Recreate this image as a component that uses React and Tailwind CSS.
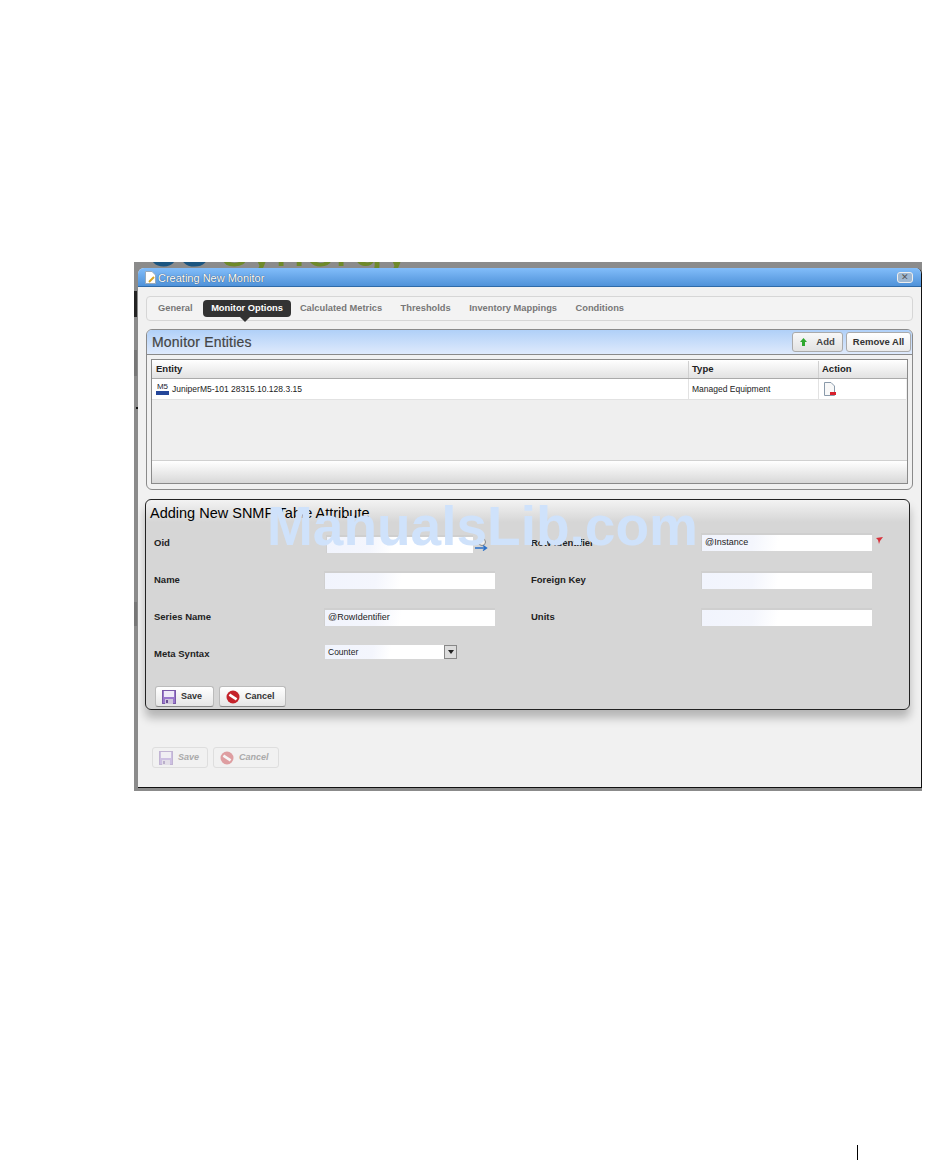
import React from "react";

const SaveIcon = ({ faded }) => (
  <svg width="14" height="14" viewBox="0 0 14 14" className={faded ? "opacity-40" : ""}>
    <rect x="0.5" y="0.5" width="13" height="13" fill="#9a78cc" stroke="#7a5aa8" />
    <rect x="2" y="1" width="10" height="6" fill="#efeaf8" />
    <rect x="3" y="9" width="8" height="5" fill="#cfc6dc" />
    <rect x="4" y="10" width="2" height="3" fill="#6a4e92" />
  </svg>
);

const CancelIcon = ({ faded }) => (
  <svg width="14" height="14" viewBox="0 0 14 14" className={faded ? "opacity-40" : ""}>
    <circle cx="7" cy="7" r="6.5" fill="#c4232b" />
    <path d="M3.4 4.6 L10.6 9.4" stroke="#fff" strokeWidth="2.6" />
  </svg>
);

const tabs = ["General", "Monitor Options", "Calculated Metrics", "Thresholds", "Inventory Mappings", "Conditions"];

const Input = ({ value, width = "w-[171px]", className = "" }) => (
  <div
    className={`${width} h-[18px] flex items-center pl-[3px] text-[9px] text-[#222] border-t-2 border-l border-[#cfcfcf] bg-[linear-gradient(100deg,#f1f4fd_0%,#f4f6fd_30%,#ffffff_45%,#ffffff_100%)] ${className}`}
  >
    {value}
  </div>
);

const Label = ({ children, className = "" }) => (
  <div className={`mt-[2px] text-[9.5px] font-bold text-[#222] ${className}`}>{children}</div>
);

const FormButton = ({ icon, label, width, faded }) => (
  <button
    className={`${width} h-[21px] flex items-center pl-[6px] gap-[5px] rounded-[3px] text-[9px] font-bold ${
      faded
        ? "border border-[#dedede] italic text-[#aaa] bg-[#f1f1f1]"
        : "border border-[#bbb] border-b-[#888] text-[#333] bg-[linear-gradient(#ffffff,#e6e6e6)]"
    }`}
  >
    {icon}
    {label}
  </button>
);

export default function App() {
  return (
    <div className="relative min-h-[1163px] bg-white font-['Liberation_Sans',Arial,sans-serif]">
      <div className="pt-[262px] pl-[134px] w-[922px]">
        {/* grey frame behind the dialog */}
        <div className="relative h-[529px] w-[788px] pt-[6px] pl-[4px] pb-[3px] bg-[#8b8b8b] overflow-hidden">
          <div className="absolute left-[14px] top-[-35px] text-[54px] leading-[40px] whitespace-nowrap text-[#1b5580] font-bold">
            co<span className="ml-[10px] text-[#6f8a2a] font-normal">synergy</span>
          </div>
          <div className="absolute left-0 top-[29px] w-[3px] h-[26px] bg-[#222]" />
          <div className="absolute left-0 top-[88px] w-[3px] h-[26px] bg-[#777]" />
          <div className="absolute left-[2px] top-[145px] w-[2px] h-[2px] bg-[#111]" />
          <div className="absolute left-0 top-[340px] w-[3px] h-[24px] bg-[#777]" />

          <div className="relative h-[520px] bg-[#f1f1f1] rounded-t-[6px] border-r border-b border-[#111] overflow-hidden">
            {/* title bar */}
            <div className="h-[19px] flex items-center pl-[7px] pr-[8px] border-b border-[#2e6aa8] bg-[linear-gradient(#82bdfa,#4f92d9)]">
              <svg width="11" height="13" viewBox="0 0 11 13">
                <path d="M0.5 0.5 H7 L10.5 4 V12.5 H0.5 Z" fill="#fff" stroke="#9ab" />
                <path d="M4 11 L9 6" stroke="#d8a520" strokeWidth="2" />
              </svg>
              <div className="ml-[2px] pt-[2px] text-[11px] text-white [text-shadow:0_0_1px_#123]">Creating New Monitor</div>
              <div className="ml-auto w-[16px] h-[11px] flex items-center justify-center rounded-[3px] border border-[#eee] bg-[#9fb8d2] text-[9px] leading-none text-[#555]">
                ✕
              </div>
            </div>

            {/* tabs */}
            <div className="mt-[9px] ml-[8px] w-[767px] h-[25px] flex items-center pl-[3px] rounded-[4px] border border-[#d6d6d6] bg-[#f3f3f3]">
              {tabs.map((t) => (
                <div
                  key={t}
                  className={`relative h-[17px] flex items-center rounded-[4px] px-[8px] pt-[1px] text-[9.3px] font-bold ${
                    t === "Monitor Options" ? "mr-[1px] bg-[#333] text-white" : "mr-[2.5px] text-[#777]"
                  }`}
                >
                  {t}
                  {t === "Monitor Options" && (
                    <span className="absolute left-[37px] top-[17px] border-x-[5px] border-t-[5px] border-x-transparent border-t-[#333]" />
                  )}
                </div>
              ))}
            </div>

            {/* monitor entities */}
            <div className="mt-[8px] ml-[8px] w-[767px] h-[161px] rounded-[6px] border border-[#8a8a8a] bg-[#f1f1f1] overflow-hidden">
              <div className="h-[25px] flex items-center pl-[5px] pr-[1px] border-b border-[#8a8a8a] bg-[linear-gradient(#b0d0f8,#dfeafc)]">
                <div className="text-[14px] text-[#444] tracking-[0.2px] [-webkit-text-stroke:0.2px_#444]">Monitor Entities</div>
                <button className="ml-auto h-[20px] w-[51px] flex items-center justify-center gap-[9px] rounded-[3px] border border-[#aaa] bg-[linear-gradient(#f8f8f8,#e2e2e2)] text-[9.5px] font-bold text-[#444]">
                  <svg width="7" height="8" viewBox="0 0 7 8">
                    <path d="M3.5 0 L7 4 H5 V8 H2 V4 H0 Z" fill="#2fa82f" />
                  </svg>
                  Add
                </button>
                <button className="ml-[3px] h-[20px] w-[65px] rounded-[3px] border border-[#aaa] bg-[linear-gradient(#ffffff,#ececec)] text-[9.5px] font-bold text-[#333]">
                  Remove All
                </button>
              </div>

              <div className="mt-[4px] ml-[4px] w-[757px] h-[125px] flex flex-col border border-[#8a8a8a] bg-[#efefef]">
                <div className="h-[19px] flex border-b border-[#aaa] pt-[1px] text-[9.5px] font-bold text-[#222] bg-[linear-gradient(#ffffff,#e2e2e2)]">
                  <div className="w-[537px] pl-[4px] flex items-center border-r border-[#d0d0d0]">Entity</div>
                  <div className="w-[130px] pl-[3px] flex items-center border-r border-[#d0d0d0]">Type</div>
                  <div className="pl-[3px] flex items-center">Action</div>
                </div>
                <div className="h-[21px] w-[754px] flex bg-white border-b border-[#e2e2e2] text-[8.5px] text-[#222]">
                  <div className="w-[537px] pl-[4px] flex items-center gap-[3px] border-r border-[#e2e2e2]">
                    <div className="w-[13px] flex flex-col items-center leading-[8px] text-[8px] text-[#223]">
                      M5
                      <div className="w-[13px] h-[4px] bg-[#25479a]" />
                    </div>
                    JuniperM5-101 28315.10.128.3.15
                  </div>
                  <div className="w-[130px] pl-[3px] flex items-center border-r border-[#e2e2e2]">Managed Equipment</div>
                  <div className="pl-[5px] flex items-center">
                    <svg width="12" height="14" viewBox="0 0 12 14">
                      <path d="M0.5 0.5 H7 L10.5 4 V13.5 H0.5 Z" fill="#f8f8f8" stroke="#8a9aaa" />
                      <rect x="6" y="10" width="6" height="3" fill="#d8202c" />
                    </svg>
                  </div>
                </div>
                <div className="flex-1" />
                <div className="h-[23px] border-t border-[#d0d0d0] bg-[linear-gradient(#ffffff,#d8d8d8)]" />
              </div>
            </div>

            {/* table attribute form */}
            <div className="mt-[9px] ml-[7px] w-[765px] h-[211px] rounded-[6px] border border-[#222] pl-[4px] bg-[linear-gradient(#f3f3f3,#d6d6d6_22px)] shadow-[0_8px_10px_rgba(0,0,0,0.25)]">
              <div className="pt-[4px] text-[14.5px] leading-[18px] text-black">Adding New SNMP Table Attribute</div>
              <div className="mt-[2px] ml-[4px] grid grid-cols-[170px_207px_170px_200px] grid-rows-[37px_37px_37px] items-center">
                <Label>Oid</Label>
                <div className="flex items-center pl-[2px]">
                  <Input width="w-[147px]" className="mt-[3px]" />
                  <svg width="14" height="13" viewBox="0 0 14 13" className="ml-[1px] mt-[3px]">
                    <circle cx="8" cy="4" r="3.5" fill="#eee" stroke="#888" />
                    <path d="M1 10 H12 M9 7.5 L12.5 10 L9 12.5" stroke="#2a6fc8" strokeWidth="1.4" fill="none" />
                  </svg>
                </div>
                <Label>Row Identifier</Label>
                <div className="flex items-center gap-[4px]">
                  <Input value="@Instance" className="mb-[1px]" />
                  <svg width="7" height="7" viewBox="0 0 7 7" className="mb-[5px]">
                    <path d="M0 1 L7 0 L4 4 L3 7 L2 3 Z" fill="#d8303a" />
                  </svg>
                </div>
                <Label>Name</Label>
                <Input />
                <Label>Foreign Key</Label>
                <Input />
                <Label>Series Name</Label>
                <Input value="@RowIdentifier" />
                <Label>Units</Label>
                <Input />
              </div>
              <div className="ml-[4px] h-[36px] flex items-center">
                <Label className="w-[170px]">Meta Syntax</Label>
                <div className="w-[132px] h-[14px] flex ml-[1px] mb-[2px]">
                  <div className="flex-1 pl-[3px] flex items-center text-[8.5px] text-[#222] bg-[linear-gradient(100deg,#f1f4fd_0%,#f4f6fd_40%,#ffffff_55%)]">
                    Counter
                  </div>
                  <div className="w-[13px] flex items-center justify-center border border-[#888] bg-[#dcdcdc]">
                    <span className="border-x-[3px] border-t-[4px] border-x-transparent border-t-[#222]" />
                  </div>
                </div>
              </div>
              <div className="mt-[15px] ml-[5px] flex gap-[5px]">
                <FormButton icon={<SaveIcon />} label="Save" width="w-[59px]" />
                <FormButton icon={<CancelIcon />} label="Cancel" width="w-[67px]" />
              </div>
            </div>

            <div className="mt-[37px] ml-[14px] flex gap-[5px]">
              <FormButton faded icon={<SaveIcon faded />} label="Save" width="w-[56px]" />
              <FormButton faded icon={<CancelIcon faded />} label="Cancel" width="w-[66px]" />
            </div>
          </div>
        </div>

        {/* page number rule */}
        <div className="mt-[354px] ml-[723px] w-px h-[15px] bg-black" />
      </div>

      {/* watermark */}
      <div className="absolute left-[267px] top-[496px] text-[55px] leading-[60px] font-bold text-[#cfe2fb] whitespace-nowrap">
        ManualsLib.com
      </div>
    </div>
  );
}
